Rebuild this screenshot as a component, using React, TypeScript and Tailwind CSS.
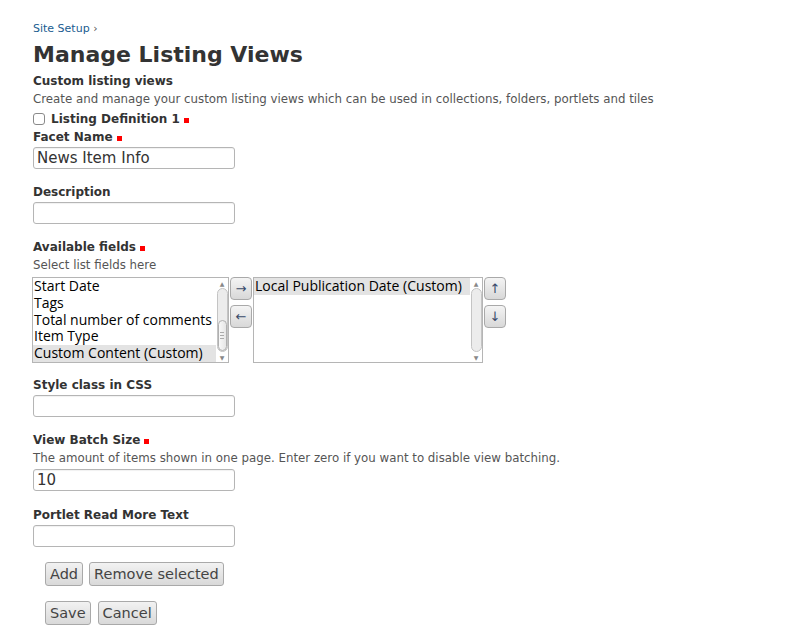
import type { ReactNode } from 'react'

const font = "font-['DejaVu_Sans',Verdana,sans-serif]"

function Required() {
  return <span className="inline-block w-[5px] h-[5px] bg-[#ff0000] ml-[4px]" />
}

function Label({ children, required }: { children: ReactNode; required?: boolean }) {
  return (
    <div className="text-[12px] leading-[18px] font-bold text-[#333]">
      {children}
      {required && <Required />}
    </div>
  )
}

function Help({ children }: { children: ReactNode }) {
  return <div className="text-[11.8px] leading-[18px] text-[#555]">{children}</div>
}

function TextInput({ value = '' }: { value?: string }) {
  return (
    <div className="w-[202px] h-[22px] border border-[#b5b5b5] rounded-[3px] bg-white px-[3px] text-[15px] leading-[20px] text-[#333] shadow-[inset_0_1px_1px_rgba(0,0,0,0.06)]">
      {value}
    </div>
  )
}

function Btn({ children }: { children: ReactNode }) {
  return (
    <button className="h-[24px] px-[4px] rounded-[3px] border border-[#a9a9a9] bg-gradient-to-b from-[#f2f2f2] to-[#d9d9d9] text-[14.5px] leading-[20px] text-[#444]">
      {children}
    </button>
  )
}

function ArrowBtn({ glyph }: { glyph: string }) {
  return (
    <div className="w-[22px] h-[23px] rounded-[4px] border border-[#a9a9a9] bg-gradient-to-b from-[#f4f4f4] to-[#d8d8d8] flex items-center justify-center text-[13px] text-[#3a4a6a]">
      {glyph}
    </div>
  )
}

function Scrollbar({ thumb }: { thumb: boolean }) {
  return (
    <div className="w-[12px] h-full flex flex-col items-center bg-white">
      <div className="h-[10px] flex items-center justify-center text-[6px] text-[#888]">▲</div>
      <div className="flex-1 w-[11px] rounded-full border border-[#c4c4c4] bg-[#ececec] flex flex-col justify-end">
        {thumb && (
          <div className="h-[31px] rounded-full border border-[#b0b0b0] bg-gradient-to-r from-[#f8f8f8] to-[#e6e6e6] flex flex-col items-center justify-center gap-[2px]">
            <span className="w-[4px] h-px bg-[#aaa]" />
            <span className="w-[4px] h-px bg-[#aaa]" />
            <span className="w-[4px] h-px bg-[#aaa]" />
          </div>
        )}
      </div>
      <div className="h-[10px] flex items-center justify-center text-[6px] text-[#888]">▼</div>
    </div>
  )
}

function ListBox({ items, selected, width, thumb }: { items: string[]; selected: number; width: string; thumb: boolean }) {
  return (
    <div className={`${width} h-[86px] border border-[#b5b5b5] bg-white flex`}>
      <div className="flex-1 overflow-hidden font-['Open_Sans',sans-serif] text-[14px] leading-[16.8px] text-black">
        {items.map((it, i) => (
          <div key={it} className={`pl-[1px] whitespace-nowrap ${i === selected ? 'bg-[#e3e3e3]' : ''}`}>
            {it}
          </div>
        ))}
      </div>
      <Scrollbar thumb={thumb} />
    </div>
  )
}

export default function App() {
  return (
    <div className={`${font} bg-white min-h-[640px] pl-[33px] pt-[22px] text-[#333]`}>
      <div className="text-[11px] leading-[14px] text-[#205c90]">
        Site Setup <span className="text-[#555]">›</span>
      </div>
      <h1 className="text-[22px] leading-[28px] font-bold text-[#333] mt-[5px]">Manage Listing Views</h1>

      <div className="mt-[3px]">
        <Label>Custom listing views</Label>
        <Help>Create and manage your custom listing views which can be used in collections, folders, portlets and tiles</Help>
      </div>

      <div className="flex items-center h-[18px] mt-[2px]">
        <span className="w-[12px] h-[12px] border border-[#8a8a8a] rounded-[3px] bg-white mr-[6px]" />
        <Label required>Listing Definition 1</Label>
      </div>

      <div>
        <Label required>Facet Name</Label>
        <div className="mt-px">
          <TextInput value="News Item Info" />
        </div>
      </div>

      <div className="mt-[14px]">
        <Label>Description</Label>
        <div className="mt-px">
          <TextInput />
        </div>
      </div>

      <div className="mt-[14px]">
        <Label required>Available fields</Label>
        <Help>Select list fields here</Help>
        <div className="flex items-start mt-[3px] -ml-px">
          <ListBox
            width="w-[197px]"
            items={['Start Date', 'Tags', 'Total number of comments', 'Item Type', 'Custom Content (Custom)']}
            selected={4}
            thumb
          />
          <div className="flex flex-col gap-[5px] mx-px">
            <ArrowBtn glyph="→" />
            <ArrowBtn glyph="←" />
          </div>
          <ListBox width="w-[230px]" items={['Local Publication Date (Custom)']} selected={0} thumb={false} />
          <div className="flex flex-col gap-[5px] ml-px">
            <ArrowBtn glyph="↑" />
            <ArrowBtn glyph="↓" />
          </div>
        </div>
      </div>

      <div className="mt-[13px]">
        <Label>Style class in CSS</Label>
        <div className="mt-px">
          <TextInput />
        </div>
      </div>

      <div className="mt-[14px]">
        <Label required>View Batch Size</Label>
        <Help>The amount of items shown in one page. Enter zero if you want to disable view batching.</Help>
        <div className="mt-[2px]">
          <TextInput value="10" />
        </div>
      </div>

      <div className="mt-[15px]">
        <Label>Portlet Read More Text</Label>
        <div className="mt-px">
          <TextInput />
        </div>
      </div>

      <div className="flex gap-[6px] ml-[12px] mt-[15px]">
        <Btn>Add</Btn>
        <Btn>Remove selected</Btn>
      </div>
      <div className="flex gap-[7px] ml-[12px] mt-[15px]">
        <Btn>Save</Btn>
        <Btn>Cancel</Btn>
      </div>
    </div>
  )
}
